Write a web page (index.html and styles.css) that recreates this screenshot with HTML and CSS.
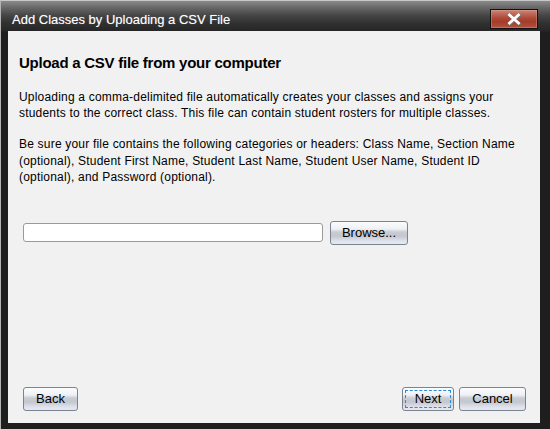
FILE: index.html
```html
<!DOCTYPE html>
<html>
<head>
<meta charset="utf-8">
<link rel="stylesheet" href="styles.css">
</head>
<body>
<div class="window">
  <div class="titlebar">
    <span class="title">Add Classes by Uploading a CSV File</span>
    <button class="close" aria-label="Close">
      <svg width="16" height="12" viewBox="0 0 16 12">
        <path d="M3.5 2 L12.5 10 M12.5 2 L3.5 10" stroke="#707070" stroke-width="3.4" stroke-linecap="square" transform="translate(0.7 0.7)"/>
        <path d="M3.5 2 L12.5 10 M12.5 2 L3.5 10" stroke="#ffffff" stroke-width="2.8" stroke-linecap="square"/>
      </svg>
    </button>
  </div>
  <div class="content">
    <h1 class="heading">Upload a CSV file from your computer</h1>
    <p class="text p1">Uploading a comma-delimited file automatically creates your classes and assigns your students to the correct class. This file can contain student rosters for multiple classes.</p>
    <p class="text p2">Be sure your file contains the following categories or headers: Class Name, Section Name (optional), Student First Name, Student Last Name, Student User Name, Student ID (optional), and Password (optional).</p>
    <div class="file-row">
      <input class="file-input" type="text">
      <button class="btn browse">Browse...</button>
    </div>
    <div class="footer">
      <button class="btn back">Back</button>
      <div class="right-btns">
        <button class="btn next">Next</button>
        <button class="btn cancel">Cancel</button>
      </div>
    </div>
  </div>
</div>
</body>
</html>
```
FILE: styles.css
```css
* { box-sizing: border-box; }
html, body { margin: 0; padding: 0; }
body { font-family: "Liberation Sans", Arial, sans-serif; background: #222; }

.window {
  width: 550px;
  height: 429px;
  display: flex;
  flex-direction: column;
  background: #1e1e1e;
  border-top: 1px solid #c8c8c8;
  border-left: 1px solid #b4b4b4;
  padding: 0 10px 6px 7px;
  background-image: linear-gradient(to bottom, #8a8a8a 0px, #666 7px, #474747 14px, #313131 22px, #262626 30px, #1e1e1e 31px);
}

.titlebar {
  height: 30px;
  display: flex;
  align-items: flex-start;
  justify-content: space-between;
  flex-shrink: 0;
}

.title {
  color: #fff;
  font-size: 13px;
  margin-left: 4px;
  margin-top: 11px;
  line-height: 15px;
  text-shadow: 0 0 1px rgba(255,255,255,0.4);
}

.close {
  width: 48px;
  height: 20px;
  margin-top: 8px;
  margin-right: 2px;
  padding: 0;
  border: 1px solid #111;
  background: linear-gradient(to bottom, #c9897c 0, #bd6656 4px, #ab4433 9px, #a53c2b 12px, #b4533f 18px);
  box-shadow: inset 0 0 0 1px rgba(230,170,160,0.35);
  display: flex;
  align-items: center;
  justify-content: center;
}

.content {
  flex: 1;
  background: #f1f1f1;
  display: flex;
  flex-direction: column;
  padding: 0 14px 12px 11px;
}

.heading {
  margin: 23px 0 0 0;
  font-size: 15px;
  line-height: 18px;
  font-weight: bold;
  letter-spacing: -0.25px;
  color: #000;
}

.text {
  margin: 0;
  font-size: 12px;
  line-height: 16px;
  letter-spacing: 0.2px;
  color: #000;
  padding-right: 4px;
}
.p1 { margin-top: 17px; }
.p2 { margin-top: 15px; line-height: 16.5px; }

.file-row {
  margin-top: 35px;
  padding-left: 4px;
  display: flex;
  align-items: center;
  gap: 7px;
}

.file-input {
  width: 300px;
  height: 19px;
  border: 1px solid #9a9a9a;
  border-radius: 3px;
  background: #fff;
  padding: 0;
  margin: 0;
}

.btn {
  font-family: "Liberation Sans", Arial, sans-serif;
  font-size: 13px;
  color: #000;
  height: 24px;
  padding: 0;
  border: 1px solid #7c8390;
  border-radius: 3px;
  background: linear-gradient(to bottom, #fbfcfe 0, #eef0f5 7px, #c9ccd3 10px, #c3c7cf 14px, #dfe2ea 19px, #e9ecf2 23px);
  line-height: 20px;
}

.browse { width: 78px; }

.footer {
  margin-top: auto;
  padding-left: 4px;
  display: flex;
  justify-content: space-between;
  align-items: center;
}

.back { width: 55px; }
.right-btns { display: flex; gap: 5px; }
.next {
  width: 52px;
  outline: 1px dashed #2a8ad4;
  outline-offset: -4px;
}
.cancel { width: 67px; }
```
